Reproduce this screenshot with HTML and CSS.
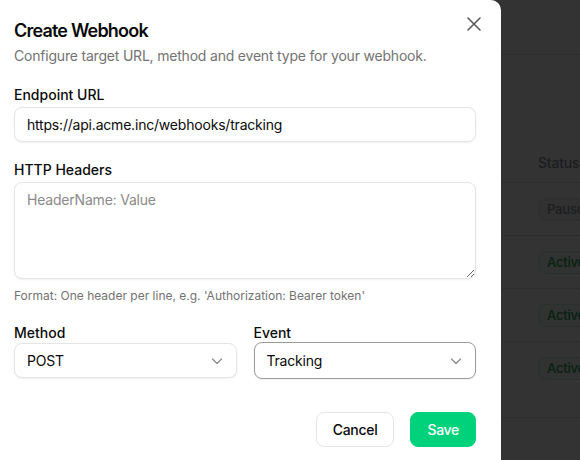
FILE: index.html
```html
<!DOCTYPE html>
<html lang="en">
<head>
    <meta charset="UTF-8">
    <meta name="viewport" content="width=device-width, initial-scale=1.0">
    <title>Webhooks</title>
    <link rel="stylesheet" href="styles.css">
</head>
<body>
    <div class="app">
        <header class="topbar"></header>
        <main class="content">
            <div class="card">
                <div class="table">
                    <div class="row head">
                        <div class="cell"></div>
                        <div class="cell">Status</div>
                    </div>
                    <div class="row">
                        <div class="cell"></div>
                        <div class="cell"><span class="badge paused">Paused</span></div>
                    </div>
                    <div class="row">
                        <div class="cell"></div>
                        <div class="cell"><span class="badge active">Active</span></div>
                    </div>
                    <div class="row">
                        <div class="cell"></div>
                        <div class="cell"><span class="badge active">Active</span></div>
                    </div>
                    <div class="row">
                        <div class="cell"></div>
                        <div class="cell"><span class="badge active">Active</span></div>
                    </div>
                </div>
            </div>
        </main>
    </div>

    <div class="overlay"></div>

    <div class="dialog" role="dialog">
        <button type="button" class="close" aria-label="Close">
            <svg width="14" height="14" viewBox="0 0 14 14" fill="none" stroke="currentColor" stroke-width="1.5" stroke-linecap="round">
                <path d="M1 1l12 12M13 1L1 13"/>
            </svg>
        </button>

        <h2 class="dialog-title">Create Webhook</h2>
        <p class="dialog-desc">Configure target URL, method and event type for your webhook.</p>

        <form class="form">
            <div class="field">
                <label for="url">Endpoint URL</label>
                <input type="text" id="url" class="input" value="https://api.acme.inc/webhooks/tracking">
            </div>

            <div class="field">
                <label for="headers">HTTP Headers</label>
                <textarea id="headers" class="input textarea" placeholder="HeaderName: Value"></textarea>
                <p class="hint">Format: One header per line, e.g. 'Authorization: Bearer token'</p>
            </div>

            <div class="field-row">
                <div class="field">
                    <label for="method">Method</label>
                    <div class="select">
                        <select id="method">
                            <option>POST</option>
                            <option>PUT</option>
                        </select>
                        <svg width="16" height="16" viewBox="0 0 16 16" fill="none" stroke="currentColor" stroke-width="1.2" stroke-linecap="round" stroke-linejoin="round">
                            <path d="M3.5 6l4.5 4.5L12.5 6"/>
                        </svg>
                    </div>
                </div>
                <div class="field">
                    <label for="event">Event</label>
                    <div class="select focused">
                        <select id="event">
                            <option>Tracking</option>
                            <option>Delivery</option>
                        </select>
                        <svg width="16" height="16" viewBox="0 0 16 16" fill="none" stroke="currentColor" stroke-width="1.2" stroke-linecap="round" stroke-linejoin="round">
                            <path d="M3.5 6l4.5 4.5L12.5 6"/>
                        </svg>
                    </div>
                </div>
            </div>

            <div class="actions">
                <button type="button" class="btn btn-outline">Cancel</button>
                <button type="submit" class="btn btn-primary">Save</button>
            </div>
        </form>
    </div>
</body>
</html>
```

FILE: styles.css
```css
* {
    box-sizing: border-box;
}

body {
    margin: 0;
    width: 580px;
    height: 460px;
    overflow: hidden;
    position: relative;
    font-family: Inter, "Noto Sans", sans-serif;
    color: #0a0a0a;
    background: #fff;
}

/* page behind the dialog */
.topbar {
    height: 55px;
    border-bottom: 1px solid #e5e7eb;
}

.content {
    padding-top: 87px;
}

.card {
    height: 276px;
    border-bottom: 1px solid #e5e7eb;
}

.row {
    display: grid;
    grid-template-columns: 1fr 50px;
    height: 53px;
    align-items: center;
    border-bottom: 1px solid #e5e7eb;
    font-size: 14px;
}

.row:last-child {
    border-bottom: none;
}

.row.head {
    height: 41px;
    color: #8b919c;
    font-weight: 500;
    letter-spacing: -0.2px;
}

.row .cell:last-child {
    padding-left: 8px;
    white-space: nowrap;
}

.badge {
    display: inline-block;
    height: 23px;
    line-height: 21px;
    padding: 0 8px;
    border-radius: 8px;
    border: 1px solid;
    font-size: 13px;
    font-weight: 500;
    letter-spacing: -0.2px;
}

.badge.active {
    color: #2f9e5c;
    background: #eefcf3;
    border-color: #d3f3df;
}

.badge.paused {
    color: #8f96a0;
    background: #f3f4f6;
    border-color: #e5e7eb;
}

.overlay {
    position: absolute;
    inset: 0;
    background: rgba(0, 0, 0, 0.8);
}

/* dialog */
.dialog {
    position: absolute;
    top: 0;
    left: -10px;
    width: 511px;
    height: 480px;
    padding: 17px 25px 24px 24px;
    background: #fff;
    border-radius: 0 10px 0 0;
}

.close {
    position: absolute;
    top: 17px;
    right: 20px;
    padding: 0;
    border: none;
    background: none;
    color: #555;
    cursor: pointer;
    display: flex;
}

.dialog-title {
    margin: 0;
    font-size: 18px;
    line-height: 28px;
    font-weight: 600;
    letter-spacing: -0.8px;
}

.dialog-desc {
    margin: 1px 0 0;
    font-size: 14px;
    line-height: 20px;
    color: #737373;
    letter-spacing: -0.2px;
}

.form {
    margin-top: 19px;
}

.field {
    margin-bottom: 18px;
}

label {
    display: block;
    margin-bottom: 2px;
    font-size: 14px;
    line-height: 20px;
    font-weight: 500;
}

.input {
    display: block;
    width: 100%;
    height: 35px;
    padding: 0 12px;
    border: 1px solid #e5e5e5;
    border-radius: 8px;
    box-shadow: 0 1px 2px rgba(0, 0, 0, 0.06);
    font-family: inherit;
    font-size: 14px;
    letter-spacing: -0.2px;
    color: #0a0a0a;
    background: #fff;
    outline: none;
}

.textarea {
    height: 97px;
    padding: 7px 12px;
    line-height: 20px;
}

.textarea::placeholder {
    color: #8a8a8a;
}

.hint {
    margin: 9px 0 0;
    font-size: 12px;
    line-height: 16px;
    color: #737373;
}

.field-row {
    display: grid;
    grid-template-columns: 1fr 1fr;
    gap: 17px;
    margin-top: 19px;
}

.field-row .field {
    margin-bottom: 0;
}

.field-row label {
    margin-bottom: 0;
}

.select {
    position: relative;
}

.select select {
    appearance: none;
    width: 100%;
    height: 35px;
    padding: 0 12px;
    border: 1px solid #e5e5e5;
    border-radius: 8px;
    box-shadow: 0 1px 2px rgba(0, 0, 0, 0.06);
    font-family: inherit;
    font-size: 14px;
    letter-spacing: -0.2px;
    color: #0a0a0a;
    background: #fff;
    outline: none;
}

.select.focused select {
    height: 37px;
    margin-top: -1px;
    border-color: #9a9a9a;
}

.select svg {
    position: absolute;
    top: 10px;
    right: 12px;
    color: #8a8a8a;
    pointer-events: none;
}

.actions {
    display: flex;
    justify-content: flex-end;
    gap: 16px;
    margin-top: 33px;
}

.btn {
    height: 35px;
    padding: 0 16px;
    border-radius: 8px;
    font-family: inherit;
    font-size: 14px;
    font-weight: 500;
    letter-spacing: -0.3px;
    cursor: pointer;
}

.btn-outline {
    background: #fff;
    border: 1px solid #e5e5e5;
    color: #0a0a0a;
}

.btn-primary {
    background: #00d17b;
    border: 1px solid #00d17b;
    color: #fff;
}
```
